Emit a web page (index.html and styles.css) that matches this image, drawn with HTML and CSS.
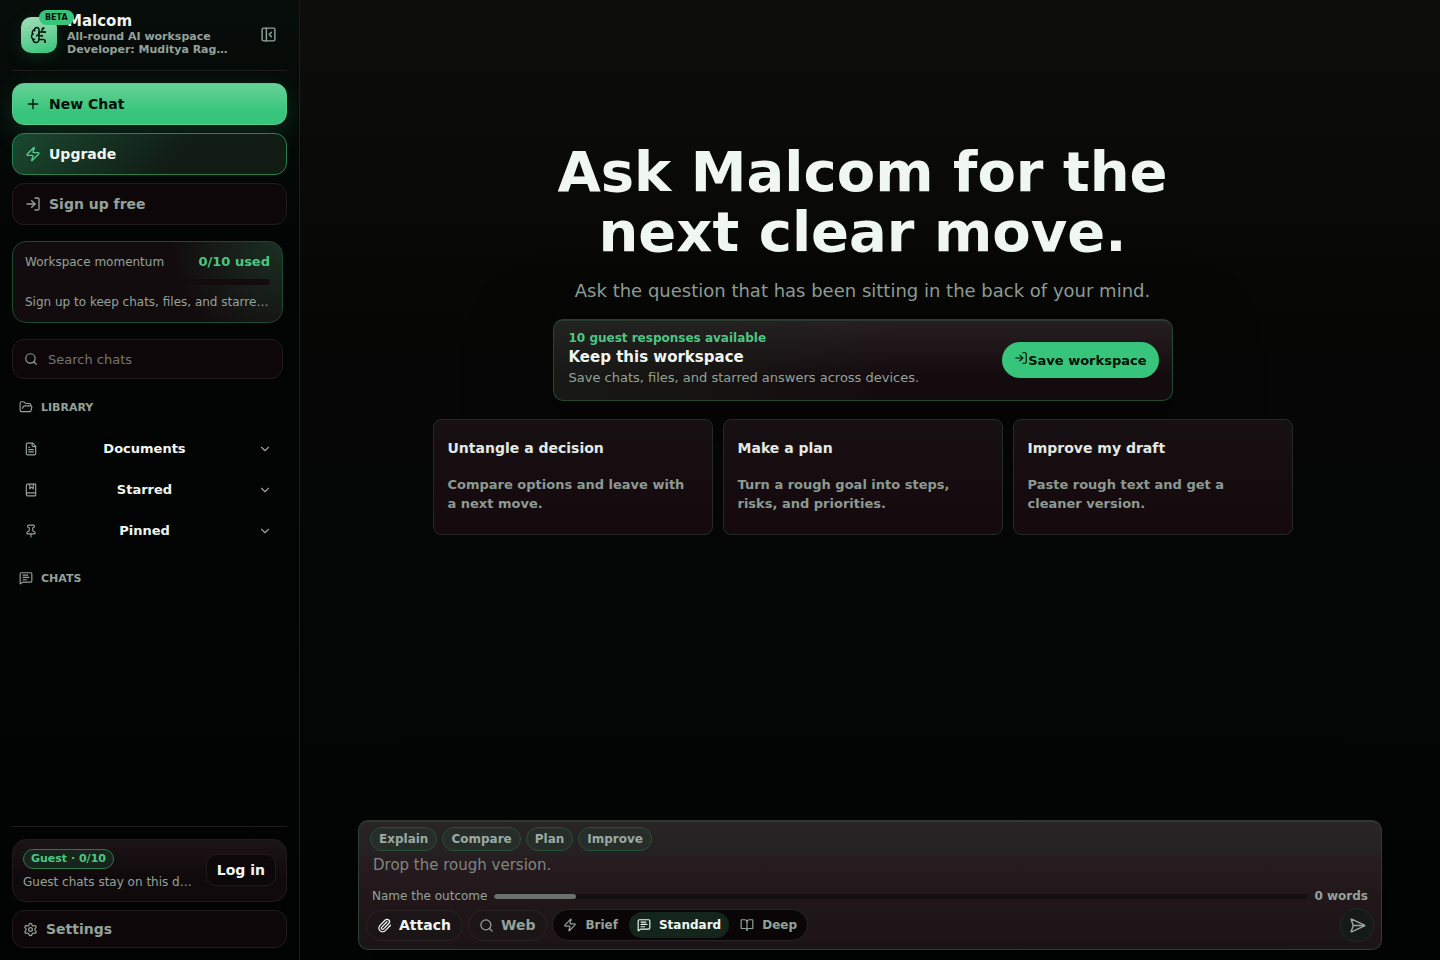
FILE: index.html
```html
<!DOCTYPE html>
<html lang="en">
<head>
    <meta charset="UTF-8">
    <meta name="viewport" content="width=device-width, initial-scale=1.0">
    <title>Malcom</title>
    <link rel="stylesheet" href="styles.css">
</head>
<body>
    <!-- shared icons -->
    <svg class="icon-defs" aria-hidden="true">
        <symbol id="i-zap" viewBox="0 0 24 24"><path d="M4 14a1 1 0 0 1-.78-1.63l9.9-10.2a.5.5 0 0 1 .86.46l-1.92 6.02A1 1 0 0 0 13 10h7a1 1 0 0 1 .78 1.63l-9.9 10.2a.5.5 0 0 1-.86-.46l1.92-6.02A1 1 0 0 0 11 14z"/></symbol>
        <symbol id="i-login" viewBox="0 0 24 24"><path d="m10 17 5-5-5-5"/><path d="M15 12H3"/><path d="M15 3h4a2 2 0 0 1 2 2v14a2 2 0 0 1-2 2h-4"/></symbol>
        <symbol id="i-search" viewBox="0 0 24 24"><circle cx="11" cy="11" r="8"/><path d="m21 21-4.3-4.3"/></symbol>
        <symbol id="i-chevron" viewBox="0 0 24 24"><path d="m6 9 6 6 6-6"/></symbol>
        <symbol id="i-message" viewBox="0 0 24 24"><path d="M22 17a2 2 0 0 1-2 2H6.828a2 2 0 0 0-1.414.586l-2.202 2.202A.71.71 0 0 1 2 21.286V5a2 2 0 0 1 2-2h16a2 2 0 0 1 2 2z"/><path d="M7 11h10"/><path d="M7 15h6"/><path d="M7 7h8"/></symbol>
    </svg>

    <div class="app">
        <aside class="sidebar">
            <header class="brand">
                <div class="logo">
                    <svg class="icon icon-18" viewBox="0 0 24 24"><path d="M12 5a3 3 0 1 0-5.997.125 4 4 0 0 0-2.526 5.77 4 4 0 0 0 .556 6.588A4 4 0 1 0 12 18Z"/><path d="M9 13a4.5 4.5 0 0 0 3-4"/><path d="M6.003 5.125A3 3 0 0 0 6.401 6.5"/><path d="M3.477 10.896a4 4 0 0 1 .585-.396"/><path d="M6 18a4 4 0 0 1-1.967-.516"/><path d="M12 13h4"/><path d="M12 18h6a2 2 0 0 1 2 2v1"/><path d="M12 8h8"/><path d="M16 8V5a2 2 0 0 1 2-2"/><circle cx="16" cy="13" r=".5"/><circle cx="18" cy="3" r=".5"/><circle cx="20" cy="21" r=".5"/><circle cx="20" cy="8" r=".5"/></svg>
                    <span class="beta">BETA</span>
                </div>
                <div class="brand-text">
                    <strong>Malcom</strong>
                    <span>All-round AI workspace</span>
                    <span>Developer: Muditya Raghav</span>
                </div>
                <button type="button" class="collapse" aria-label="Collapse sidebar">
                    <svg class="icon icon-17" viewBox="0 0 24 24"><rect width="18" height="18" x="3" y="3" rx="2"/><path d="M9 3v18"/><path d="m16 15-3-3 3-3"/></svg>
                </button>
            </header>

            <div class="actions">
                <button type="button" class="action primary">
                    <svg class="icon icon-16" viewBox="0 0 24 24"><path d="M5 12h14"/><path d="M12 5v14"/></svg>
                    New Chat
                </button>
                <button type="button" class="action upgrade">
                    <svg class="icon icon-16"><use href="#i-zap"/></svg>
                    Upgrade
                </button>
                <button type="button" class="action signup">
                    <svg class="icon icon-16"><use href="#i-login"/></svg>
                    Sign up free
                </button>
            </div>

            <div class="side-scroll">
                <section class="momentum">
                    <div class="momentum-row">
                        <span>Workspace momentum</span>
                        <strong>0/10 used</strong>
                    </div>
                    <div class="momentum-track"></div>
                    <p>Sign up to keep chats, files, and starred answers.</p>
                </section>

                <label class="search">
                    <svg class="icon icon-14"><use href="#i-search"/></svg>
                    <input type="search" placeholder="Search chats" aria-label="Search chats">
                </label>

                <h2 class="side-title">
                    <svg class="icon icon-14" viewBox="0 0 24 24"><path d="m6 14 1.5-2.9A2 2 0 0 1 9.24 10H20a2 2 0 0 1 1.94 2.5l-1.54 6a2 2 0 0 1-1.95 1.5H4a2 2 0 0 1-2-2V5a2 2 0 0 1 2-2h3.9a2 2 0 0 1 1.69.9l.81 1.2a2 2 0 0 0 1.67.9H18a2 2 0 0 1 2 2v2"/></svg>
                    LIBRARY
                </h2>
                <div class="library">
                    <button type="button" class="library-row">
                        <svg class="icon icon-14" viewBox="0 0 24 24"><path d="M15 2H6a2 2 0 0 0-2 2v16a2 2 0 0 0 2 2h12a2 2 0 0 0 2-2V7Z"/><path d="M14 2v4a2 2 0 0 0 2 2h4"/><path d="M10 9H8"/><path d="M16 13H8"/><path d="M16 17H8"/></svg>
                        <span>Documents</span>
                        <svg class="icon icon-14"><use href="#i-chevron"/></svg>
                    </button>
                    <button type="button" class="library-row">
                        <svg class="icon icon-14" viewBox="0 0 24 24"><path d="M10 2v8l3-3 3 3V2"/><path d="M4 19.5v-15A2.5 2.5 0 0 1 6.5 2H19a1 1 0 0 1 1 1v18a1 1 0 0 1-1 1H6.5a1 1 0 0 1 0-5H20"/></svg>
                        <span>Starred</span>
                        <svg class="icon icon-14"><use href="#i-chevron"/></svg>
                    </button>
                    <button type="button" class="library-row">
                        <svg class="icon icon-14" viewBox="0 0 24 24"><path d="M12 17v5"/><path d="M9 10.76a2 2 0 0 1-1.11 1.79l-1.78.9A2 2 0 0 0 5 15.24V16a1 1 0 0 0 1 1h12a1 1 0 0 0 1-1v-.76a2 2 0 0 0-1.11-1.79l-1.78-.9A2 2 0 0 1 15 10.76V7a1 1 0 0 1 1-1 2 2 0 0 0 0-4H8a2 2 0 0 0 0 4 1 1 0 0 1 1 1z"/></svg>
                        <span>Pinned</span>
                        <svg class="icon icon-14"><use href="#i-chevron"/></svg>
                    </button>
                </div>
                <h2 class="side-title">
                    <svg class="icon icon-14"><use href="#i-message"/></svg>
                    CHATS
                </h2>
            </div>

            <footer class="side-footer">
                <div class="guest">
                    <div class="guest-text">
                        <span class="guest-badge">Guest · 0/10</span>
                        <p>Guest chats stay on this device.</p>
                    </div>
                    <button type="button" class="login">Log in</button>
                </div>
                <button type="button" class="settings">
                    <svg class="icon icon-15" viewBox="0 0 24 24"><path d="M9.671 4.136a2.34 2.34 0 0 1 4.659 0 2.34 2.34 0 0 0 3.319 1.915 2.34 2.34 0 0 1 2.33 4.033 2.34 2.34 0 0 0 0 3.831 2.34 2.34 0 0 1-2.33 4.033 2.34 2.34 0 0 0-3.319 1.915 2.34 2.34 0 0 1-4.659 0 2.34 2.34 0 0 0-3.32-1.915 2.34 2.34 0 0 1-2.33-4.033 2.34 2.34 0 0 0 0-3.831A2.34 2.34 0 0 1 6.35 6.051a2.34 2.34 0 0 0 3.319-1.915"/><circle cx="12" cy="12" r="3"/></svg>
                    Settings
                </button>
            </footer>
        </aside>

        <main class="main">
            <section class="hero">
                <h1>Ask Malcom for the next clear move.</h1>
                <p class="lead">Ask the question that has been sitting in the back of your mind.</p>

                <div class="keep">
                    <div class="keep-text">
                        <span class="keep-count">10 guest responses available</span>
                        <strong>Keep this workspace</strong>
                        <span>Save chats, files, and starred answers across devices.</span>
                    </div>
                    <button type="button" class="save"><svg class="icon icon-14"><use href="#i-login"/></svg>Save workspace</button>
                </div>

                <div class="starters">
                    <button type="button" class="starter">
                        <strong>Untangle a decision</strong>
                        <span>Compare options and leave with a next move.</span>
                    </button>
                    <button type="button" class="starter">
                        <strong>Make a plan</strong>
                        <span>Turn a rough goal into steps, risks, and priorities.</span>
                    </button>
                    <button type="button" class="starter">
                        <strong>Improve my draft</strong>
                        <span>Paste rough text and get a cleaner version.</span>
                    </button>
                </div>
            </section>

            <form class="composer">
                <div class="chips">
                    <button type="button">Explain</button>
                    <button type="button">Compare</button>
                    <button type="button">Plan</button>
                    <button type="button">Improve</button>
                </div>
                <textarea rows="1" placeholder="Drop the rough version." aria-label="Message"></textarea>
                <div class="meter">
                    <span>Name the outcome</span>
                    <div class="meter-track"><div class="meter-fill" style="width: 10%"></div></div>
                    <strong>0 words</strong>
                </div>
                <div class="tools">
                    <button type="button" class="tool attach">
                        <svg class="icon icon-15" viewBox="0 0 24 24"><path d="m16 6-8.414 8.586a2 2 0 0 0 2.829 2.829l8.414-8.586a4 4 0 1 0-5.657-5.657l-8.379 8.551a6 6 0 1 0 8.485 8.485l8.379-8.551"/></svg>
                        Attach
                    </button>
                    <button type="button" class="tool">
                        <svg class="icon icon-15"><use href="#i-search"/></svg>
                        Web
                    </button>
                    <div class="modes">
                        <button type="button"><svg class="icon icon-14"><use href="#i-zap"/></svg>Brief</button>
                        <button type="button" class="active"><svg class="icon icon-14"><use href="#i-message"/></svg>Standard</button>
                        <button type="button"><svg class="icon icon-14" viewBox="0 0 24 24"><path d="M12 7v14"/><path d="M3 18a1 1 0 0 1-1-1V4a1 1 0 0 1 1-1h5a4 4 0 0 1 4 4 4 4 0 0 1 4-4h5a1 1 0 0 1 1 1v13a1 1 0 0 1-1 1h-6a3 3 0 0 0-3 3 3 3 0 0 0-3-3z"/></svg>Deep</button>
                    </div>
                    <button type="submit" class="send" aria-label="Send">
                        <svg class="icon icon-17" viewBox="0 0 24 24"><path d="M3.714 3.048a.498.498 0 0 0-.683.627l2.843 7.627a2 2 0 0 1 0 1.396l-2.842 7.627a.498.498 0 0 0 .682.627l18-8.5a.5.5 0 0 0 0-.904z"/><path d="M6 12h16"/></svg>
                    </button>
                </div>
            </form>
        </main>
    </div>
</body>
</html>
```
FILE: styles.css
```css
:root {
    --text: #f0f7f3;
    --muted: #93a29a;
    --green: #37c57b;
    --green-text: #4fc583;
    --line: #231a1d;
    --panel: #0e0709;
}
* {
    box-sizing: border-box;
}
body {
    margin: 0;
    background: #020403;
    color: var(--text);
    font-family: "DejaVu Sans", sans-serif;
    font-size: 14px;
}
button, input, textarea {
    font: inherit;
    color: inherit;
}
button {
    cursor: pointer;
}
p, h1, h2 {
    margin: 0;
}
.icon-defs {
    display: none;
}
.icon {
    flex: none;
    fill: none;
    stroke: currentColor;
    stroke-width: 2;
    stroke-linecap: round;
    stroke-linejoin: round;
}
.icon-14 { width: 14px; height: 14px; }
.icon-15 { width: 15px; height: 15px; }
.icon-16 { width: 16px; height: 16px; }
.icon-17 { width: 17px; height: 17px; }
.icon-18 { width: 18px; height: 18px; }

.app {
    display: grid;
    grid-template-columns: 300px 1fr;
    height: 100vh;
}

/* Sidebar */
.sidebar {
    display: flex;
    flex-direction: column;
    min-height: 0;
    padding: 0 12px 12px;
    border-right: 1px solid #1b1e1d;
    background: linear-gradient(180deg, #070d0a 0, #020504 240px, #020403 100%);
}
.brand {
    display: flex;
    align-items: center;
    gap: 10px;
    height: 71px;
    padding: 0 10px 0 9px;
    border-bottom: 1px solid var(--line);
}
.logo {
    position: relative;
    display: grid;
    place-items: center;
    width: 36px;
    height: 36px;
    border-radius: 10px;
    background: linear-gradient(165deg, #a4ddb9, #37c57b);
    box-shadow: 0 4px 16px rgba(55, 197, 123, 0.15);
    color: #04120a;
}
.beta {
    position: absolute;
    top: -7px;
    left: 18px;
    padding: 0 6px;
    border-radius: 8px;
    background: var(--green);
    font-size: 8px;
    font-weight: bold;
    line-height: 15px;
}
.brand-text {
    flex: 1;
    min-width: 0;
    padding-bottom: 2px;
}
.brand-text strong, .brand-text span {
    display: block;
}
.brand-text strong {
    font-size: 15px;
    line-height: 18px;
}
.brand-text span {
    max-width: 164px;
    overflow: hidden;
    text-overflow: ellipsis;
    white-space: nowrap;
    color: var(--muted);
    font-size: 11px;
    font-weight: bold;
    line-height: 13px;
}
.collapse {
    display: grid;
    padding: 0 0 2px;
    border: none;
    background: none;
    color: var(--muted);
}
.actions {
    display: flex;
    flex-direction: column;
    gap: 8px;
    padding: 12px 0 16px;
}
.action {
    display: flex;
    align-items: center;
    gap: 8px;
    height: 42px;
    padding: 0 12px;
    border: 1px solid var(--line);
    border-radius: 12px;
    font-weight: bold;
}
.primary {
    border-color: #58cc8c;
    background: linear-gradient(180deg, #66d196, #37c57b 70%);
    box-shadow: 0 8px 28px rgba(55, 197, 123, 0.2);
    color: #031008;
}
.upgrade {
    border-color: #27804f;
    background: linear-gradient(135deg, #1a492f, #111c15 60%);
}
.upgrade .icon {
    color: #58c98a;
}
.signup {
    background: var(--panel);
    color: var(--muted);
}
.side-scroll {
    flex: 1;
    min-height: 0;
    overflow: hidden;
    padding-right: 4px;
}
.momentum {
    height: 82px;
    padding: 12px;
    border: 1px solid #1c4a31;
    border-radius: 14px;
    background: radial-gradient(circle at 100% 0, #1b3022, #130c0f 110px);
    color: var(--muted);
    font-size: 12px;
    line-height: 16px;
}
.momentum-row {
    display: flex;
    justify-content: space-between;
}
.momentum-row strong {
    color: var(--green-text);
    font-size: 13px;
}
.momentum-track {
    height: 6px;
    margin: 9px 0;
    border-radius: 3px;
    background: #130b0e;
}
.momentum p, .guest p {
    overflow: hidden;
    text-overflow: ellipsis;
    white-space: nowrap;
}
.search {
    display: flex;
    align-items: center;
    gap: 10px;
    height: 40px;
    margin: 16px 0 19px;
    padding: 0 11px;
    border: 1px solid var(--line);
    border-radius: 12px;
    background: var(--panel);
    color: var(--muted);
    font-size: 13px;
}
.search input {
    flex: 1;
    min-width: 0;
    padding: 0;
    border: none;
    outline: none;
    background: none;
}
.search input::placeholder {
    color: #757575;
}
.side-title {
    display: flex;
    align-items: center;
    gap: 8px;
    height: 18px;
    padding: 0 7px;
    color: var(--muted);
    font-size: 11px;
}
.library {
    padding: 12px 0 18px;
}
.library-row {
    display: grid;
    grid-template-columns: 14px 1fr 14px;
    gap: 8px;
    align-items: center;
    width: 100%;
    height: 41px;
    padding: 0 11px 0 12px;
    border: none;
    background: none;
    font-size: 13px;
    font-weight: bold;
}
.library-row span {
    padding-right: 7px;
}
.library-row .icon {
    color: var(--muted);
}
.side-footer {
    padding-top: 12px;
    border-top: 1px solid var(--line);
}
.guest {
    display: flex;
    align-items: center;
    gap: 12px;
    height: 63px;
    margin-bottom: 8px;
    padding: 0 10px 2px;
    border: 1px solid var(--line);
    border-radius: 14px;
    background: linear-gradient(180deg, #1c1417, #110a0d 60%);
}
.guest-text {
    flex: 1;
    min-width: 0;
    color: var(--muted);
    font-size: 12px;
    line-height: 16px;
}
.guest-badge {
    display: inline-block;
    margin-bottom: 5px;
    padding: 0 7px;
    border: 1px solid #277a4c;
    border-radius: 10px;
    background: #17251c;
    color: var(--green-text);
    font-size: 11px;
    font-weight: bold;
    line-height: 18px;
}
.login {
    height: 32px;
    padding: 0 10px;
    border: 1px solid var(--line);
    border-radius: 10px;
    background: #0c0809;
    font-weight: bold;
}
.settings {
    display: flex;
    align-items: center;
    gap: 8px;
    width: 100%;
    height: 38px;
    padding: 0 10px;
    border: 1px solid var(--line);
    border-radius: 12px;
    background: var(--panel);
    color: var(--muted);
    font-weight: bold;
}

/* Main */
.main {
    display: flex;
    flex-direction: column;
    min-width: 0;
    padding-bottom: 10px;
    overflow: hidden;
    background: linear-gradient(180deg, #0d0e0c 0, #060605 35%, #040605 60%, #020504 100%);
}
.hero {
    flex: 1;
    display: flex;
    flex-direction: column;
    align-items: center;
    padding: 142px 15px 0 0;
}
.hero h1 {
    max-width: 680px;
    font-size: 56px;
    line-height: 60px;
    text-align: center;
}
.lead {
    margin: 16px 0 15px;
    color: var(--muted);
    font-size: 18px;
    line-height: 26px;
}
.keep {
    display: flex;
    align-items: center;
    justify-content: space-between;
    width: 100%;
    max-width: 620px;
    height: 82px;
    margin-bottom: 18px;
    padding: 0 13px 2px 15px;
    border: 1px solid #234833;
    border-top: 2px solid #2a3b31;
    border-radius: 10px;
    background: linear-gradient(100deg, rgba(28, 40, 31, 0.5), rgba(28, 40, 31, 0) 55%), linear-gradient(180deg, #261f22, #140b0e 70%);
    box-shadow: 0 24px 80px rgba(0, 0, 0, 0.5);
}
.keep-text {
    display: flex;
    flex-direction: column;
    padding-bottom: 2px;
    color: var(--muted);
    font-size: 13px;
    line-height: 21px;
}
.keep-text strong {
    color: var(--text);
    font-size: 15px;
    line-height: 20px;
}
.keep-text .keep-count {
    color: var(--green-text);
    font-size: 12px;
    font-weight: bold;
    line-height: 18px;
}
.save {
    height: 36px;
    padding: 0 12px;
    border: none;
    border-radius: 18px;
    background: var(--green);
    color: #031008;
    font-size: 13px;
    font-weight: bold;
}
.starters {
    display: grid;
    grid-template-columns: repeat(3, 1fr);
    gap: 10px;
    width: 100%;
    max-width: 860px;
}
.starter {
    display: flex;
    flex-direction: column;
    gap: 17px;
    height: 116px;
    padding: 18px 14px;
    border: 1px solid #232a27;
    border-radius: 8px;
    background: linear-gradient(180deg, #171012, #15090d);
    text-align: left;
}
.starter strong {
    color: #e3e9e5;
    line-height: 20px;
}
.starter span {
    color: #8c9a92;
    font-size: 13px;
    font-weight: bold;
    line-height: 19px;
}
.composer {
    width: calc(100% - 116px);
    max-width: 1024px;
    height: 130px;
    margin: 0 auto;
    padding: 5px 7px 0;
    border: 1px solid #2b4035;
    border-top: 2px solid #2b3a31;
    border-radius: 10px;
    background: linear-gradient(180deg, #292426, #252022 25%, #271b1f 32%, #21171a 60%, #1b1416);
    box-shadow: 0 18px 80px rgba(0, 0, 0, 0.5);
}
.chips {
    display: flex;
    gap: 5px;
    padding: 0 4px;
}
.chips button {
    height: 24px;
    padding: 0 8px;
    border: 1px solid #275038;
    border-radius: 12px;
    background: #272d29;
    color: #9aa9a1;
    font-size: 12px;
    font-weight: bold;
}
.composer textarea {
    display: block;
    width: 100%;
    height: 36px;
    padding: 4px 7px;
    border: none;
    outline: none;
    resize: none;
    background: none;
    font-size: 15px;
    line-height: 20px;
}
.composer textarea::placeholder {
    color: #7e8681;
}
.meter {
    display: flex;
    align-items: center;
    gap: 7px;
    padding: 0 6px;
    color: var(--muted);
    font-size: 12px;
    line-height: 18px;
}
.meter-track {
    flex: 1;
    height: 5px;
    border-radius: 3px;
    background: #150e10;
    overflow: hidden;
}
.meter-fill {
    height: 100%;
    border-radius: 3px;
    background: #69716c;
}
.tools {
    display: flex;
    align-items: center;
    gap: 5px;
    margin-top: 3px;
}
.tool {
    display: flex;
    align-items: center;
    gap: 7px;
    height: 31px;
    padding: 0 11px 0 10px;
    border: 1px solid #2a2224;
    border-radius: 16px;
    background: #1c1517;
    color: var(--muted);
    font-weight: bold;
}
.attach {
    color: var(--text);
}
.modes {
    display: flex;
    align-items: center;
    gap: 3px;
    height: 32px;
    padding: 0 2px;
    border: 1px solid #2a2224;
    border-radius: 16px;
    background: #0a0506;
}
.modes button {
    display: flex;
    align-items: center;
    gap: 8px;
    height: 26px;
    padding: 0 8px;
    border: none;
    border-radius: 13px;
    background: none;
    color: var(--muted);
    font-size: 12px;
    font-weight: bold;
}
.modes .active {
    background: #14251b;
    color: var(--text);
}
.send {
    display: grid;
    place-items: center;
    width: 34px;
    height: 34px;
    margin-left: auto;
    padding: 0;
    border: 1px solid #1c2c25;
    border-radius: 50%;
    background: #151a18;
    color: #9aa9a1;
}
```
